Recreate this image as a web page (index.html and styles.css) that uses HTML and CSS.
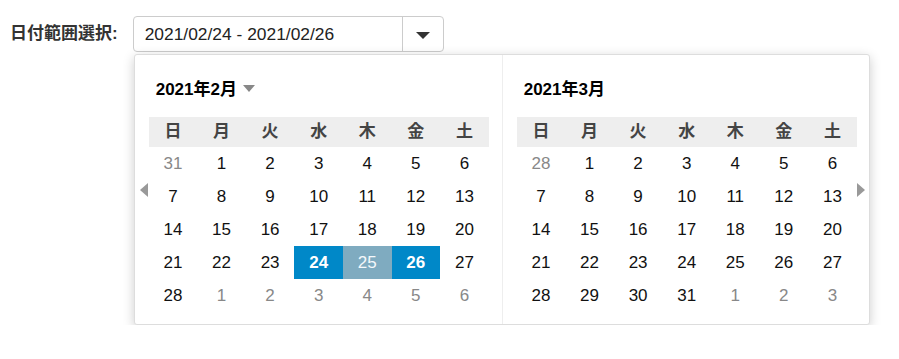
FILE: index.html
```html
<!DOCTYPE html>
<html lang="ja">
<head>
    <meta charset="UTF-8">
    <meta name="viewport" content="width=device-width, initial-scale=1.0">
    <title>日付範囲選択</title>
    <link rel="stylesheet" href="styles.css">
</head>
<body>
    <div class="row">
        <label class="label">日付範囲選択:</label>
        <div class="picker">
            <div class="field">
                <span class="value">2021/02/24 - 2021/02/26</span>
                <span class="toggle"><span class="caret"></span></span>
            </div>
            <div class="popup">
                <span class="nav prev"></span>
                <span class="nav next"></span>
                <div class="month">
                    <div class="title">2021年2月 <span class="title-caret"></span></div>
                    <div class="grid">
                        <div class="wd">日</div><div class="wd">月</div><div class="wd">火</div><div class="wd">水</div><div class="wd">木</div><div class="wd">金</div><div class="wd">土</div>
                        <div class="day other">31</div><div class="day">1</div><div class="day">2</div><div class="day">3</div><div class="day">4</div><div class="day">5</div><div class="day">6</div>
                        <div class="day">7</div><div class="day">8</div><div class="day">9</div><div class="day">10</div><div class="day">11</div><div class="day">12</div><div class="day">13</div>
                        <div class="day">14</div><div class="day">15</div><div class="day">16</div><div class="day">17</div><div class="day">18</div><div class="day">19</div><div class="day">20</div>
                        <div class="day">21</div><div class="day">22</div><div class="day">23</div><div class="day selected">24</div><div class="day in-range">25</div><div class="day selected">26</div><div class="day">27</div>
                        <div class="day">28</div><div class="day other">1</div><div class="day other">2</div><div class="day other">3</div><div class="day other">4</div><div class="day other">5</div><div class="day other">6</div>
                    </div>
                </div>
                <div class="month">
                    <div class="title">2021年3月</div>
                    <div class="grid">
                        <div class="wd">日</div><div class="wd">月</div><div class="wd">火</div><div class="wd">水</div><div class="wd">木</div><div class="wd">金</div><div class="wd">土</div>
                        <div class="day other">28</div><div class="day">1</div><div class="day">2</div><div class="day">3</div><div class="day">4</div><div class="day">5</div><div class="day">6</div>
                        <div class="day">7</div><div class="day">8</div><div class="day">9</div><div class="day">10</div><div class="day">11</div><div class="day">12</div><div class="day">13</div>
                        <div class="day">14</div><div class="day">15</div><div class="day">16</div><div class="day">17</div><div class="day">18</div><div class="day">19</div><div class="day">20</div>
                        <div class="day">21</div><div class="day">22</div><div class="day">23</div><div class="day">24</div><div class="day">25</div><div class="day">26</div><div class="day">27</div>
                        <div class="day">28</div><div class="day">29</div><div class="day">30</div><div class="day">31</div><div class="day other">1</div><div class="day other">2</div><div class="day other">3</div>
                    </div>
                </div>
            </div>
        </div>
    </div>
</body>
</html>
```

FILE: styles.css
```css
body {
    margin: 0;
    background-color: #fff;
    font-family: "Liberation Sans", "Noto Sans CJK JP", sans-serif;
    font-size: 17px;
    color: #222;
}
.row {
    display: flex;
    align-items: flex-start;
    gap: 15px;
    padding: 16px 0 0 10px;
}
.label {
    font-weight: bold;
    line-height: 36px;
    color: #333;
}
.picker {
    display: flex;
    flex-direction: column;
}
.field {
    display: flex;
    width: 309px;
    height: 34px;
    border: 1px solid #ccc;
    border-radius: 4px;
    background-color: #fff;
}
.value {
    flex: 1;
    padding-left: 11px;
    font-size: 17.4px;
    line-height: 34px;
    color: #222;
}
.toggle {
    width: 40px;
    border-left: 1px solid #ccc;
    display: flex;
    justify-content: center;
    align-items: center;
}
.caret {
    width: 0;
    height: 0;
    border-left: 7px solid transparent;
    border-right: 7px solid transparent;
    border-top: 7px solid #333;
    margin-top: 2px;
}
.popup {
    position: relative;
    display: flex;
    width: 734px;
    height: 269px;
    margin: 2px 0 0 1px;
    border: 1px solid #ddd;
    border-radius: 3px;
    background-color: #fff;
    box-shadow: 0 3px 12px rgba(0, 0, 0, 0.2);
}
.month {
    flex: 1;
    padding: 0 13px 0 14px;
}
.month:first-of-type {
    border-right: 1px solid #eee;
}
.title {
    display: flex;
    align-items: center;
    gap: 6px;
    height: 20px;
    padding: 22px 0 0 7px;
    margin-bottom: 20px;
    font-weight: bold;
    color: #000;
}
.title-caret {
    width: 0;
    height: 0;
    border-left: 6px solid transparent;
    border-right: 6px solid transparent;
    border-top: 7px solid #888;
    margin-top: 2px;
}
.grid {
    display: grid;
    grid-template-columns: repeat(7, 1fr);
    width: 340px;
}
.wd {
    height: 30px;
    line-height: 30px;
    text-align: center;
    font-weight: bold;
    color: #444;
    background-color: #eee;
}
.day {
    height: 33px;
    line-height: 33px;
    text-align: center;
    color: #111;
}
.day.other {
    color: #888;
}
.day.selected {
    background-color: #0088c8;
    color: #fff;
    font-weight: bold;
}
.day.in-range {
    background-color: #7fabc0;
    color: #f4f8fb;
}
.nav {
    position: absolute;
    top: 128px;
    width: 0;
    height: 0;
    border-top: 7px solid transparent;
    border-bottom: 7px solid transparent;
}
.nav.prev {
    left: 5px;
    border-right: 8px solid #999;
}
.nav.next {
    right: 4px;
    border-left: 8px solid #999;
}
```
